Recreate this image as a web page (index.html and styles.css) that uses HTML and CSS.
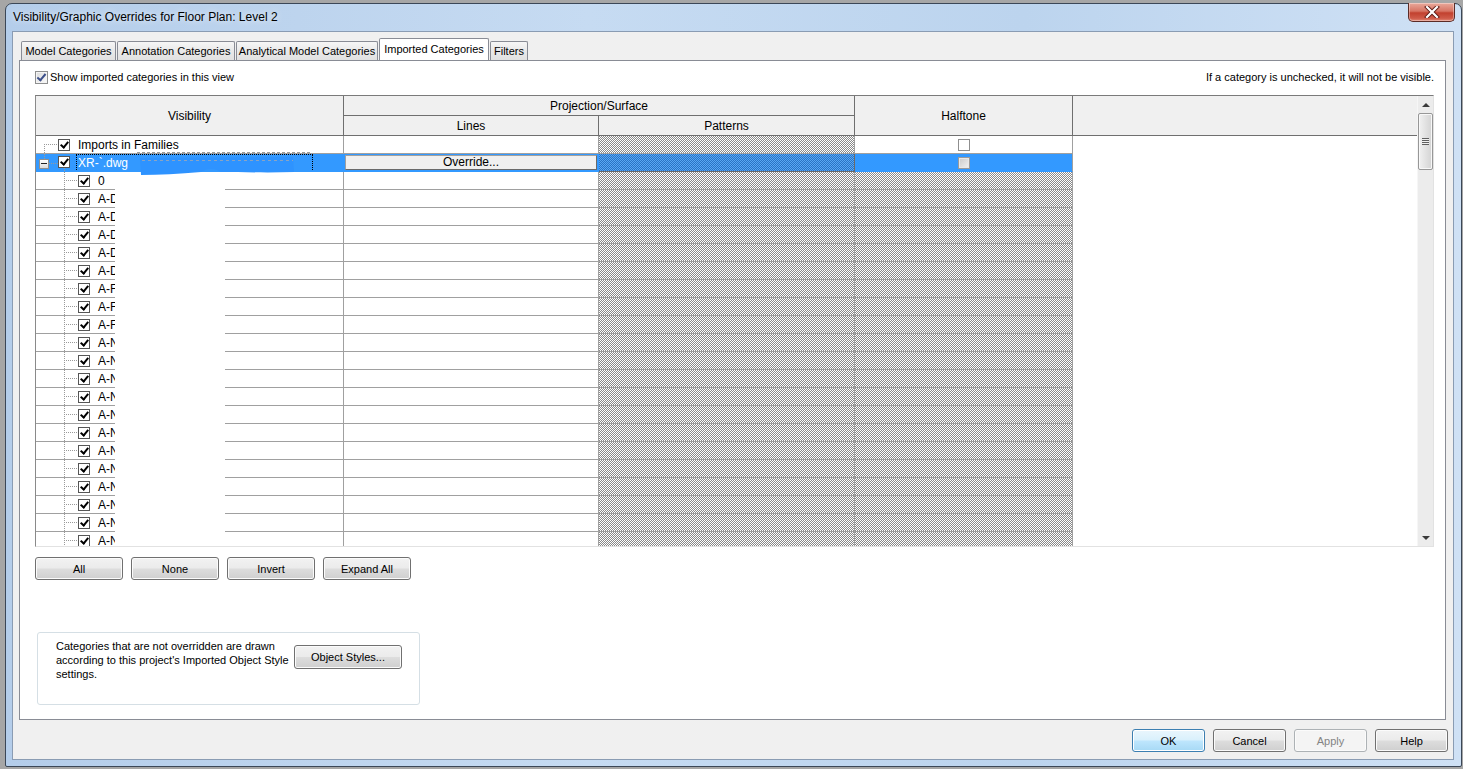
FILE: index.html
```html
<!DOCTYPE html>
<html>
<head>
<meta charset="utf-8">
<title>Visibility/Graphic Overrides</title>
<link rel="stylesheet" href="styles.css">
</head>
<body>
<div class="window">
  <div class="titlebar">
    <span class="title">Visibility/Graphic Overrides for Floor Plan: Level 2</span>
    <div class="close">
      <svg width="16" height="12" viewBox="0 0 16 12"><path d="M3 1 L13 11 M13 1 L3 11" stroke="#5a1a14" stroke-width="4" stroke-linecap="square"/><path d="M3 1 L13 11 M13 1 L3 11" stroke="#fff" stroke-width="2.2" stroke-linecap="square"/></svg>
    </div>
  </div>
  <div class="client">
    <div class="tabs">
      <div class="tab w1">Model Categories</div>
      <div class="tab w2">Annotation Categories</div>
      <div class="tab w3">Analytical Model Categories</div>
      <div class="tab active">Imported Categories</div>
      <div class="tab w5">Filters</div>
    </div>
    <div class="panel">
      <div class="topline">
        <div class="show"><span class="wcb"></span><span>Show imported categories in this view</span></div>
        <span class="hint">If a category is unchecked, it will not be visible.</span>
      </div>
      <div class="grid">
        <div class="gmain">
          <div class="ghead">
            <div class="h h-vis">Visibility</div>
            <div class="h h-proj">Projection/Surface</div>
            <div class="h h-lines">Lines</div>
            <div class="h h-pat">Patterns</div>
            <div class="h h-half">Halftone</div>
            <div class="h h-rest"></div>
          </div>
          <div class="gbody">
            <div class="row">
              <div class="c vis r-imports"><span class="cb"></span><span class="lbl">Imports in Families</span></div>
              <div class="c lines"></div>
              <div class="c pat"></div>
              <div class="c half"><span class="hcb"></span></div>
              <div class="c rest"></div>
            </div>
            <div class="row sel">
              <div class="c vis r-xr"><span class="minus"></span><span class="cb"></span><span class="lbl focus">XR-`.dwg</span></div>
              <div class="c lines"><div class="override">Override...</div></div>
              <div class="c pat"></div>
              <div class="c half"><span class="hcb gray"></span></div>
              <div class="c rest"></div>
            </div>
            <div class="row"><div class="c vis child"><span class="cb"></span><span class="lbl">0</span></div><div class="c lines"></div><div class="c pat"></div><div class="c half hatch"></div><div class="c rest"></div></div>
            <div class="row"><div class="c vis child"><span class="cb"></span><span class="lbl">A-D</span></div><div class="c lines"></div><div class="c pat"></div><div class="c half hatch"></div><div class="c rest"></div></div>
            <div class="row"><div class="c vis child"><span class="cb"></span><span class="lbl">A-D</span></div><div class="c lines"></div><div class="c pat"></div><div class="c half hatch"></div><div class="c rest"></div></div>
            <div class="row"><div class="c vis child"><span class="cb"></span><span class="lbl">A-D</span></div><div class="c lines"></div><div class="c pat"></div><div class="c half hatch"></div><div class="c rest"></div></div>
            <div class="row"><div class="c vis child"><span class="cb"></span><span class="lbl">A-D</span></div><div class="c lines"></div><div class="c pat"></div><div class="c half hatch"></div><div class="c rest"></div></div>
            <div class="row"><div class="c vis child"><span class="cb"></span><span class="lbl">A-D</span></div><div class="c lines"></div><div class="c pat"></div><div class="c half hatch"></div><div class="c rest"></div></div>
            <div class="row"><div class="c vis child"><span class="cb"></span><span class="lbl">A-F</span></div><div class="c lines"></div><div class="c pat"></div><div class="c half hatch"></div><div class="c rest"></div></div>
            <div class="row"><div class="c vis child"><span class="cb"></span><span class="lbl">A-F</span></div><div class="c lines"></div><div class="c pat"></div><div class="c half hatch"></div><div class="c rest"></div></div>
            <div class="row"><div class="c vis child"><span class="cb"></span><span class="lbl">A-F</span></div><div class="c lines"></div><div class="c pat"></div><div class="c half hatch"></div><div class="c rest"></div></div>
            <div class="row"><div class="c vis child"><span class="cb"></span><span class="lbl">A-N</span></div><div class="c lines"></div><div class="c pat"></div><div class="c half hatch"></div><div class="c rest"></div></div>
            <div class="row"><div class="c vis child"><span class="cb"></span><span class="lbl">A-N</span></div><div class="c lines"></div><div class="c pat"></div><div class="c half hatch"></div><div class="c rest"></div></div>
            <div class="row"><div class="c vis child"><span class="cb"></span><span class="lbl">A-N</span></div><div class="c lines"></div><div class="c pat"></div><div class="c half hatch"></div><div class="c rest"></div></div>
            <div class="row"><div class="c vis child"><span class="cb"></span><span class="lbl">A-N</span></div><div class="c lines"></div><div class="c pat"></div><div class="c half hatch"></div><div class="c rest"></div></div>
            <div class="row"><div class="c vis child"><span class="cb"></span><span class="lbl">A-N</span></div><div class="c lines"></div><div class="c pat"></div><div class="c half hatch"></div><div class="c rest"></div></div>
            <div class="row"><div class="c vis child"><span class="cb"></span><span class="lbl">A-N</span></div><div class="c lines"></div><div class="c pat"></div><div class="c half hatch"></div><div class="c rest"></div></div>
            <div class="row"><div class="c vis child"><span class="cb"></span><span class="lbl">A-N</span></div><div class="c lines"></div><div class="c pat"></div><div class="c half hatch"></div><div class="c rest"></div></div>
            <div class="row"><div class="c vis child"><span class="cb"></span><span class="lbl">A-N</span></div><div class="c lines"></div><div class="c pat"></div><div class="c half hatch"></div><div class="c rest"></div></div>
            <div class="row"><div class="c vis child"><span class="cb"></span><span class="lbl">A-N</span></div><div class="c lines"></div><div class="c pat"></div><div class="c half hatch"></div><div class="c rest"></div></div>
            <div class="row"><div class="c vis child"><span class="cb"></span><span class="lbl">A-N</span></div><div class="c lines"></div><div class="c pat"></div><div class="c half hatch"></div><div class="c rest"></div></div>
            <div class="row"><div class="c vis child"><span class="cb"></span><span class="lbl">A-N</span></div><div class="c lines"></div><div class="c pat"></div><div class="c half hatch"></div><div class="c rest"></div></div>
            <div class="row"><div class="c vis child"><span class="cb"></span><span class="lbl">A-N</span></div><div class="c lines"></div><div class="c pat"></div><div class="c half hatch"></div><div class="c rest"></div></div>
          </div>
        </div>
        <div class="vscroll">
          <div class="sarrow"><span class="tri-up"></span></div>
          <div class="thumb"><span class="grip"></span></div>
          <div class="track"></div>
          <div class="sarrow"><span class="tri-down"></span></div>
        </div>
        <div class="redact"></div>
        <svg class="scribble" width="176" height="24" viewBox="0 0 176 24"><path d="M3 6 L156 5 L157 20 C130 21 104 20 84 20 C78 16 70 16 64 20 C42 22 22 23 4 23 Z" fill="#2e93ff"/><path d="M0 0.5 L174 0.5" stroke="#9a9a9a" stroke-width="1" stroke-dasharray="3 2"/><path d="M5 8.5 L156 8.5" stroke="#8aa4c2" stroke-width="1" stroke-dasharray="3 3"/></svg>
      </div>
      <div class="gbtns">
        <div class="btn gb">All</div>
        <div class="btn gb">None</div>
        <div class="btn gb">Invert</div>
        <div class="btn gb">Expand All</div>
      </div>
      <div class="note">
        <div class="notetext">Categories that are not overridden are drawn<br>according to this project's Imported Object Style<br>settings.</div>
        <div class="btn objbtn">Object Styles...</div>
      </div>
    </div>
    <div class="dlgbtns">
      <div class="btn db ok">OK</div>
      <div class="btn db">Cancel</div>
      <div class="btn db disabled">Apply</div>
      <div class="btn db">Help</div>
    </div>
  </div>
</div>
</body>
</html>
```

FILE: styles.css
```css
* { box-sizing: border-box; }
html, body { margin: 0; height: 100%; }
body {
  background: #a6a6a6;
  font-family: "Liberation Sans", Arial, sans-serif;
  font-size: 11px;
  color: #000;
  overflow: hidden;
}

.window {
  margin: 3px 0 0 5px;
  width: 1457px;
  height: 764px;
  border: 1px solid #3b4757;
  border-radius: 7px 7px 2px 2px;
  background: linear-gradient(to right, #b4cdea 0%, #c6dbf2 40%, #bcd4ee 70%, #cfe1f5 100%);
  padding: 0 7px 6px 6px;
  display: flex;
  flex-direction: column;
}

.titlebar {
  height: 27px;
  display: flex;
  justify-content: space-between;
  align-items: flex-start;
  flex: none;
}
.title {
  font-size: 12px;
  line-height: 26px;
  padding-left: 1px;
  color: #000;
  text-shadow: 0 0 6px rgba(255,255,255,.9);
}
.close {
  width: 47px;
  height: 19px;
  margin-top: -1px;
  margin-right: -1px;
  border: 1px solid #5b2b26;
  border-top: none;
  border-radius: 0 0 5px 5px;
  background: linear-gradient(#e9a99b 0%, #d77564 45%, #c2412f 55%, #cf5b49 85%, #e28a78 100%);
  box-shadow: inset 0 0 0 1px rgba(255,255,255,.35);
  display: flex;
  align-items: center;
  justify-content: center;
}

.client {
  flex: 1;
  border: 1px solid #8a9cb3;
  background: #f0f0f0;
  display: flex;
  flex-direction: column;
}

/* tabs */
.tabs {
  margin-top: 6px;
  padding-left: 8px;
  height: 22px;
  display: flex;
  align-items: flex-end;
  gap: 1px;
  flex: none;
}
.tab {
  height: 19px;
  border: 1px solid #898c95;
  border-bottom: none;
  border-radius: 2px 2px 0 0;
  background: linear-gradient(#f6f6f6, #e9e9e9 50%, #e1e1e1);
  text-align: center;
  line-height: 18px;
  font-size: 11px;
  white-space: nowrap;
}
.w1 { width: 95px; }
.w2 { width: 118px; }
.w3 { width: 142px; }
.w5 { width: 38px; }
.tab.active {
  width: 110px;
  height: 23px;
  margin-bottom: -1px;
  background: #fff;
  line-height: 20px;
}

.panel {
  margin-left: 6px;
  width: 1427px;
  height: 660px;
  border: 1px solid #898c95;
  background: #fff;
  padding: 0 11px 0 15px;
  flex: none;
}

.topline {
  margin-top: 8px;
  height: 16px;
  display: flex;
  align-items: center;
  justify-content: space-between;
}
.show { display: flex; align-items: center; gap: 2px; }
.wcb {
  width: 13px;
  height: 13px;
  border: 1px solid #8e8f8f;
  background: linear-gradient(135deg, #dcdcdc, #fafafa);
  box-shadow: inset 0 0 0 1px #f4f4f4;
  display: inline-flex;
  align-items: center;
  justify-content: center;
}
.wcb::after {
  content: "";
  width: 3px;
  height: 7px;
  border: solid #3c4f8a;
  border-width: 0 2px 2px 0;
  transform: rotate(40deg);
  margin-top: -2px;
}
.hint { font-size: 11px; }

/* grid */
.grid {
  margin-top: 10px;
  height: 452px;
  border: 1px solid #e2e2e2;
  border-top-color: #7a7a7a;
  border-left-color: #8a8a8a;
  display: flex;
  position: relative;
  overflow: hidden;
}
.gmain { flex: 1; overflow: hidden; }
.ghead {
  display: grid;
  grid-template-columns: 308px 255px 256px 218px 1fr;
  grid-template-rows: 20px 20px;
  background: #f0f0f0;
}
.h {
  border-right: 1px solid #6f6f6f;
  border-bottom: 1px solid #6f6f6f;
  font-size: 12px;
  display: flex;
  align-items: center;
  justify-content: center;
}
.h-vis { grid-row: 1 / 3; grid-column: 1; }
.h-proj { grid-row: 1; grid-column: 2 / 4; }
.h-lines { grid-row: 2; grid-column: 2; }
.h-pat { grid-row: 2; grid-column: 3; }
.h-half { grid-row: 1 / 3; grid-column: 4; }
.h-rest { grid-row: 1 / 3; grid-column: 5; border-right: none; }

.row {
  display: grid;
  grid-template-columns: 308px 255px 256px 218px 1fr;
  height: 18px;
}
.c {
  height: 18px;
  border-right: 1px solid #a0a0a0;
  border-bottom: 1px solid #a0a0a0;
}
.c.rest { border: none; background: #fff; }

/* 1px checker: vertical stripes XOR horizontal stripes, then tinted */
.pat, .hatch {
  background-image:
    linear-gradient(#8a8a8a, #8a8a8a),
    linear-gradient(to right, #000 50%, #fff 50%),
    linear-gradient(to bottom, #000 50%, #fff 50%);
  background-size: auto, 2px 2px, 2px 2px;
  background-blend-mode: lighten, difference, normal;
}
.half {
  display: flex;
  align-items: center;
  justify-content: center;
}
.vis {
  display: flex;
  align-items: center;
  font-size: 12px;
  white-space: nowrap;
  overflow: hidden;
}
.lbl { line-height: 16px; }

.cb {
  width: 12px;
  height: 12px;
  border: 1px solid #555;
  background: #fff;
  display: inline-flex;
  align-items: center;
  justify-content: center;
  flex: none;
}
.cb::after {
  content: "";
  width: 3px;
  height: 6px;
  border: solid #000;
  border-width: 0 2px 2px 0;
  transform: rotate(40deg);
  margin-top: -2px;
}

.r-imports {
  padding-left: 22px;
  background:
    repeating-linear-gradient(to right, #9a9a9a 0 1px, transparent 1px 2px) 8px 8px / 14px 1px no-repeat,
    repeating-linear-gradient(to bottom, #9a9a9a 0 1px, transparent 1px 2px) 8px 8px / 1px 10px no-repeat;
}
.r-imports .cb { margin-right: 8px; }

.child {
  padding-left: 42px;
  background:
    repeating-linear-gradient(to right, #9a9a9a 0 1px, transparent 1px 2px) 28px 8px / 14px 1px no-repeat,
    repeating-linear-gradient(to bottom, #9a9a9a 0 1px, transparent 1px 2px) 28px 0 / 1px 18px no-repeat,
    #fff;
}
.child .cb { margin-right: 8px; }

.sel .c { background-color: #3399ff; border-bottom-color: #3399ff; border-right-color: #3399ff; }
.sel .half { border-right-color: #a0a0a0; }
.sel .c.rest { background: #fff; }
.sel .pat {
  background-image:
    linear-gradient(#2a73c4, #2a73c4),
    linear-gradient(#5aa8f4, #5aa8f4),
    linear-gradient(to right, #000 50%, #fff 50%),
    linear-gradient(to bottom, #000 50%, #fff 50%);
  background-size: auto, auto, 2px 2px, 2px 2px;
  background-blend-mode: lighten, multiply, difference, normal;
  border-right-color: #6a6a6a;
  border-bottom-color: #6a6a6a;
}
.r-xr {
  padding-left: 3px;
  color: #fff;
  background:
    repeating-linear-gradient(to right, #9a9a9a 0 1px, transparent 1px 2px) 13px 9px / 9px 1px no-repeat,
    repeating-linear-gradient(to bottom, #9a9a9a 0 1px, transparent 1px 2px) 8px 0 / 1px 5px no-repeat,
    repeating-linear-gradient(to bottom, #9a9a9a 0 1px, transparent 1px 2px) 28px 14px / 1px 4px no-repeat,
    #3399ff !important;
}
.minus {
  width: 10px;
  height: 10px;
  margin-top: 2px;
  border: 1px solid #8f8f8f;
  background: linear-gradient(#fff, #dcdcdc);
  display: inline-flex;
  align-items: center;
  justify-content: center;
  margin-right: 9px;
  flex: none;
}
.minus::after { content: ""; width: 6px; height: 1px; background: #222; }
.r-xr .cb { margin-top: -2px; margin-right: 7px; }
.focus { outline: 1px dotted #000; outline-offset: 0; padding: 0 2px 0 1px; width: 235px; }

.override {
  margin: 1px;
  height: 15px;
  border: 1px solid #a0a0a0;
  border-right-color: #6a6a6a;
  border-bottom-color: #6a6a6a;
  background: #f0f0f0;
  font-size: 12px;
  line-height: 13px;
  text-align: center;
}

.hcb {
  width: 12px;
  height: 12px;
  border: 1px solid #8f8f8f;
  background: #fff;
}
.hcb.gray {
  border-color: #9a9a9a;
  background: linear-gradient(135deg, #c9c9c9, #f2f2f2);
  box-shadow: inset 0 0 0 1px #e8e8e8;
}

/* scrollbar */
.vscroll {
  width: 16px;
  flex: none;
  background: #ececec;
  border-left: 1px solid #f6f6f6;
  display: flex;
  flex-direction: column;
}
.sarrow {
  height: 17px;
  display: flex;
  align-items: center;
  justify-content: center;
  flex: none;
}
.tri-up { width: 0; height: 0; border-left: 4px solid transparent; border-right: 4px solid transparent; border-bottom: 4px solid #3a3a3a; }
.tri-down { width: 0; height: 0; border-left: 4px solid transparent; border-right: 4px solid transparent; border-top: 4px solid #3a3a3a; }
.thumb {
  height: 57px;
  border: 1px solid #979797;
  border-radius: 2px;
  background: linear-gradient(to right, #f1f1f1, #e2e2e2 50%, #d3d3d3);
  box-shadow: inset 0 0 0 1px #f8f8f8;
  display: flex;
  align-items: center;
  justify-content: center;
  flex: none;
}
.grip {
  width: 7px;
  height: 7px;
  background: repeating-linear-gradient(to bottom, #5f5f5f 0 1px, #f0f0f0 1px 2px);
}
.track { flex: 1; }

.redact {
  position: absolute;
  left: 79px;
  top: 76px;
  width: 110px;
  bottom: 0;
  background: #fff;
}
.scribble {
  position: absolute;
  left: 101px;
  top: 56px;
}

/* buttons */
.btn {
  height: 23px;
  border: 1px solid #707070;
  border-radius: 3px;
  background: linear-gradient(#f2f2f2 0%, #ebebeb 48%, #dddddd 52%, #cfcfcf 100%);
  box-shadow: inset 0 0 0 1px #fbfbfb;
  font-size: 11px;
  display: flex;
  align-items: center;
  justify-content: center;
  flex: none;
}
.gbtns {
  margin-top: 10px;
  display: flex;
  gap: 8px;
}
.gb { width: 88px; }

.note {
  margin: 52px 0 0 2px;
  width: 383px;
  height: 73px;
  border: 1px solid #d5dfe5;
  border-radius: 3px;
  padding: 6px 0 0 18px;
  display: flex;
  align-items: flex-start;
}
.notetext { width: 238px; font-size: 11px; line-height: 14px; }
.objbtn { width: 108px; height: 24px; margin-top: 6px; }

.dlgbtns {
  margin-top: 9px;
  padding-right: 5px;
  display: flex;
  justify-content: flex-end;
  gap: 8px;
}
.db { width: 73px; }
.ok {
  border-color: #3c7fb1;
  background: linear-gradient(#eaf6fd 0%, #d9f0fc 48%, #bee6fd 52%, #a7d9f5 100%);
  box-shadow: inset 0 0 0 1px #fff;
}
.disabled {
  border-color: #adb2b5;
  background: #f4f4f4;
  color: #838383;
}
```
